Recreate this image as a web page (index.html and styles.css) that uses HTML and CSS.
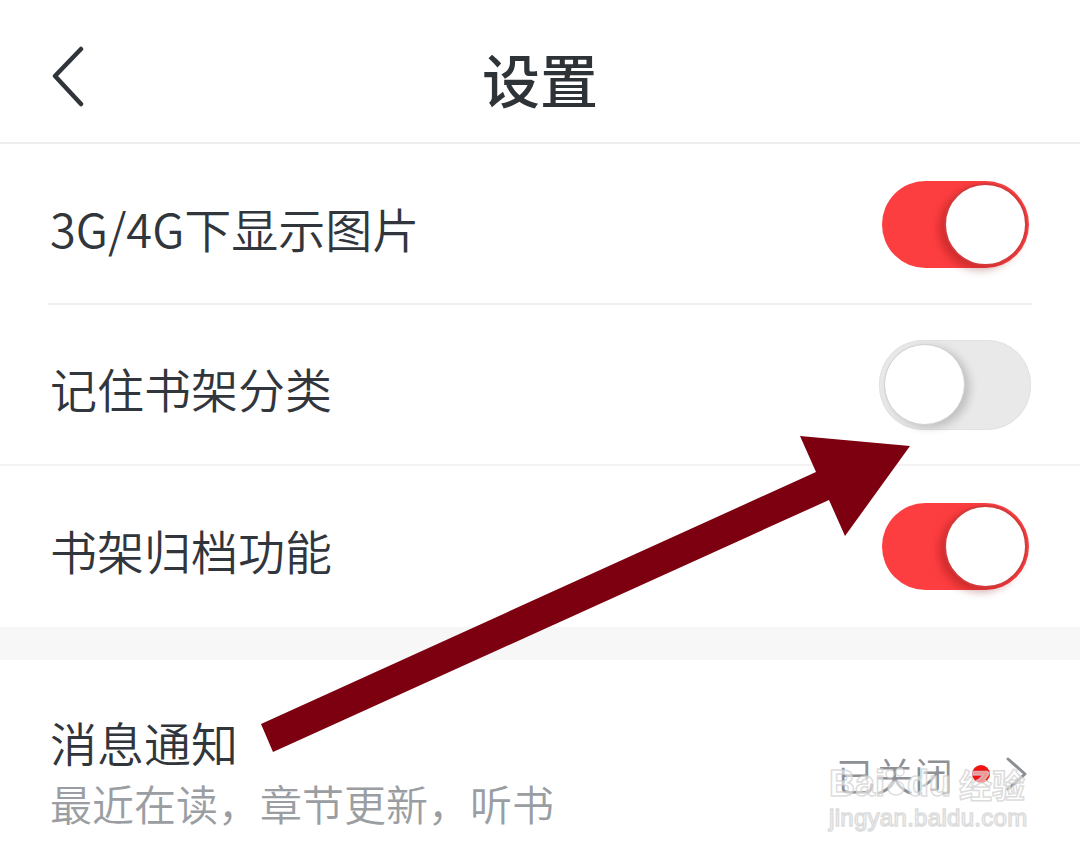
FILE: index.html
```html
<!DOCTYPE html>
<html lang="zh-CN">
<head>
    <meta charset="UTF-8">
    <meta name="viewport" content="width=device-width, initial-scale=1.0">
    <title>设置</title>
    <link rel="stylesheet" href="styles.css">
</head>
<body>
    <div class="page">
        <div class="topbar">
            <div class="back">
                <svg width="40" height="64" viewBox="0 0 40 64">
                    <polyline points="29,3 3,30 29,58" fill="none" stroke="#30353b" stroke-width="4.5" stroke-linecap="round" stroke-linejoin="round"/>
                </svg>
            </div>
            <h1 class="title">设置</h1>
            <div></div>
        </div>

        <div class="group">
            <div class="row inset-line">
                <span class="label">3G/4G下显示图片</span>
                <div class="switch on"><div class="knob"></div></div>
            </div>
            <div class="row full-line">
                <span class="label">记住书架分类</span>
                <div class="switch off"><div class="knob"></div></div>
            </div>
            <div class="row">
                <span class="label">书架归档功能</span>
                <div class="switch on"><div class="knob"></div></div>
            </div>
        </div>

        <div class="spacer"></div>

        <div class="group">
            <div class="row notify">
                <div class="texts">
                    <span class="label">消息通知</span>
                    <span class="sub">最近在读，章节更新，听书</span>
                </div>
                <div class="status">
                    <span class="state">已关闭</span>
                    <span class="dot"></span>
                    <svg width="24" height="34" viewBox="0 0 24 34">
                        <polyline points="3,2 20,17 3,32" fill="none" stroke="#8b8f94" stroke-width="3" stroke-linecap="round" stroke-linejoin="round"/>
                    </svg>
                </div>
            </div>
        </div>

        <!-- annotation arrow drawn over the screenshot -->
        <svg class="arrow" width="1080" height="861" viewBox="0 0 1080 861">
            <polygon points="261,724 816,472 800,436 910,446 845,536 829,500 273,752" fill="#7d0010"/>
        </svg>

        <div class="watermark">
            <div class="wm-top">
                <span>Bai</span>
                <svg class="paw" width="22" height="38" viewBox="0 0 22 38">
                    <circle cx="5" cy="8" r="4" />
                    <circle cx="15" cy="6" r="4" />
                    <ellipse cx="11" cy="22" rx="8" ry="7" />
                </svg>
                <span>du</span>
                <span class="wm-cn">经验</span>
            </div>
            <div class="wm-url">jingyan.baidu.com</div>
        </div>
    </div>
</body>
</html>
```

FILE: styles.css
```css
body {
    margin: 0;
    background-color: #ffffff;
    font-family: "Noto Sans CJK SC", "Noto Sans", sans-serif;
    color: #31363c;
}
.page {
    position: relative;
    width: 1080px;
    height: 861px;
    overflow: hidden;
}
.topbar {
    display: grid;
    grid-template-columns: 1fr auto 1fr;
    align-items: center;
    height: 144px;
    box-sizing: border-box;
    padding-top: 14px;
    border-bottom: 2px solid #eeeeee;
}
.back {
    padding-left: 52px;
    display: flex;
}
.title {
    margin: 0;
    font-size: 58px;
    font-weight: 500;
    line-height: 70px;
    color: #2e3338;
}
.row {
    display: flex;
    justify-content: space-between;
    align-items: center;
    height: 161px;
    box-sizing: border-box;
    padding: 0 51px 0 50px;
    position: relative;
}
.label {
    font-size: 47px;
    font-weight: 350;
    line-height: 56px;
    padding-top: 6px;
}
.inset-line::after {
    content: "";
    position: absolute;
    left: 48px;
    right: 48px;
    bottom: 0;
    height: 2px;
    background-color: #efefef;
}
.full-line {
    border-bottom: 2px solid #f3f3f3;
}
.switch {
    position: relative;
    width: 147px;
    height: 87px;
    border-radius: 44px;
}
.switch.on {
    background-color: #fd3e40;
}
.switch.off {
    width: 152px;
    height: 90px;
    margin-right: -2px;
    background-color: #e9e9e9;
    box-shadow: inset 0 0 0 1px #e2e2e2;
}
.knob {
    position: absolute;
    top: 2px;
    width: 79px;
    height: 79px;
    border-radius: 50%;
    background-color: #ffffff;
}
.switch.on .knob {
    right: 2px;
    border: 2px solid #d23a3c;
    box-shadow: -5px 4px 8px rgba(120, 10, 10, 0.35);
}
.switch.off .knob {
    left: 5px;
    top: 4px;
    border: 1px solid #d0d0d0;
    box-shadow: 5px 3px 8px rgba(0, 0, 0, 0.18);
}
.spacer {
    height: 33px;
    background-color: #f7f7f7;
}
.notify {
    height: auto;
    align-items: center;
    padding-top: 54px;
    padding-bottom: 30px;
}
.texts {
    display: flex;
    flex-direction: column;
}
.notify .label {
    padding-top: 0;
}
.sub {
    margin-top: 8px;
    font-size: 42px;
    font-weight: 350;
    line-height: 50px;
    color: #9a9ea3;
}
.status {
    display: flex;
    align-items: center;
    padding-top: 6px;
}
.state {
    font-size: 39px;
    font-weight: 350;
    line-height: 48px;
    color: #8d9196;
}
.dot {
    width: 18px;
    height: 18px;
    border-radius: 50%;
    background-color: #ef1515;
    margin: 0 15px 0 19px;
}
.arrow {
    position: absolute;
    left: 0;
    top: 0;
}
.watermark {
    position: absolute;
    left: 829px;
    top: 764px;
    font-family: "Liberation Sans", Arial, sans-serif;
    color: rgba(255, 255, 255, 0.55);
    -webkit-text-stroke: 1.5px rgba(205, 205, 205, 0.7);
}
.wm-top {
    display: flex;
    align-items: flex-end;
    font-size: 36px;
    font-weight: bold;
    line-height: 40px;
}
.paw {
    fill: rgba(255, 255, 255, 0.55);
    stroke: rgba(205, 205, 205, 0.7);
    stroke-width: 1.5;
}
.wm-cn {
    margin-left: 8px;
    font-family: "Noto Sans CJK SC", sans-serif;
    font-size: 33px;
}
.wm-url {
    font-size: 24px;
    line-height: 28px;
    letter-spacing: 0.3px;
}
```
